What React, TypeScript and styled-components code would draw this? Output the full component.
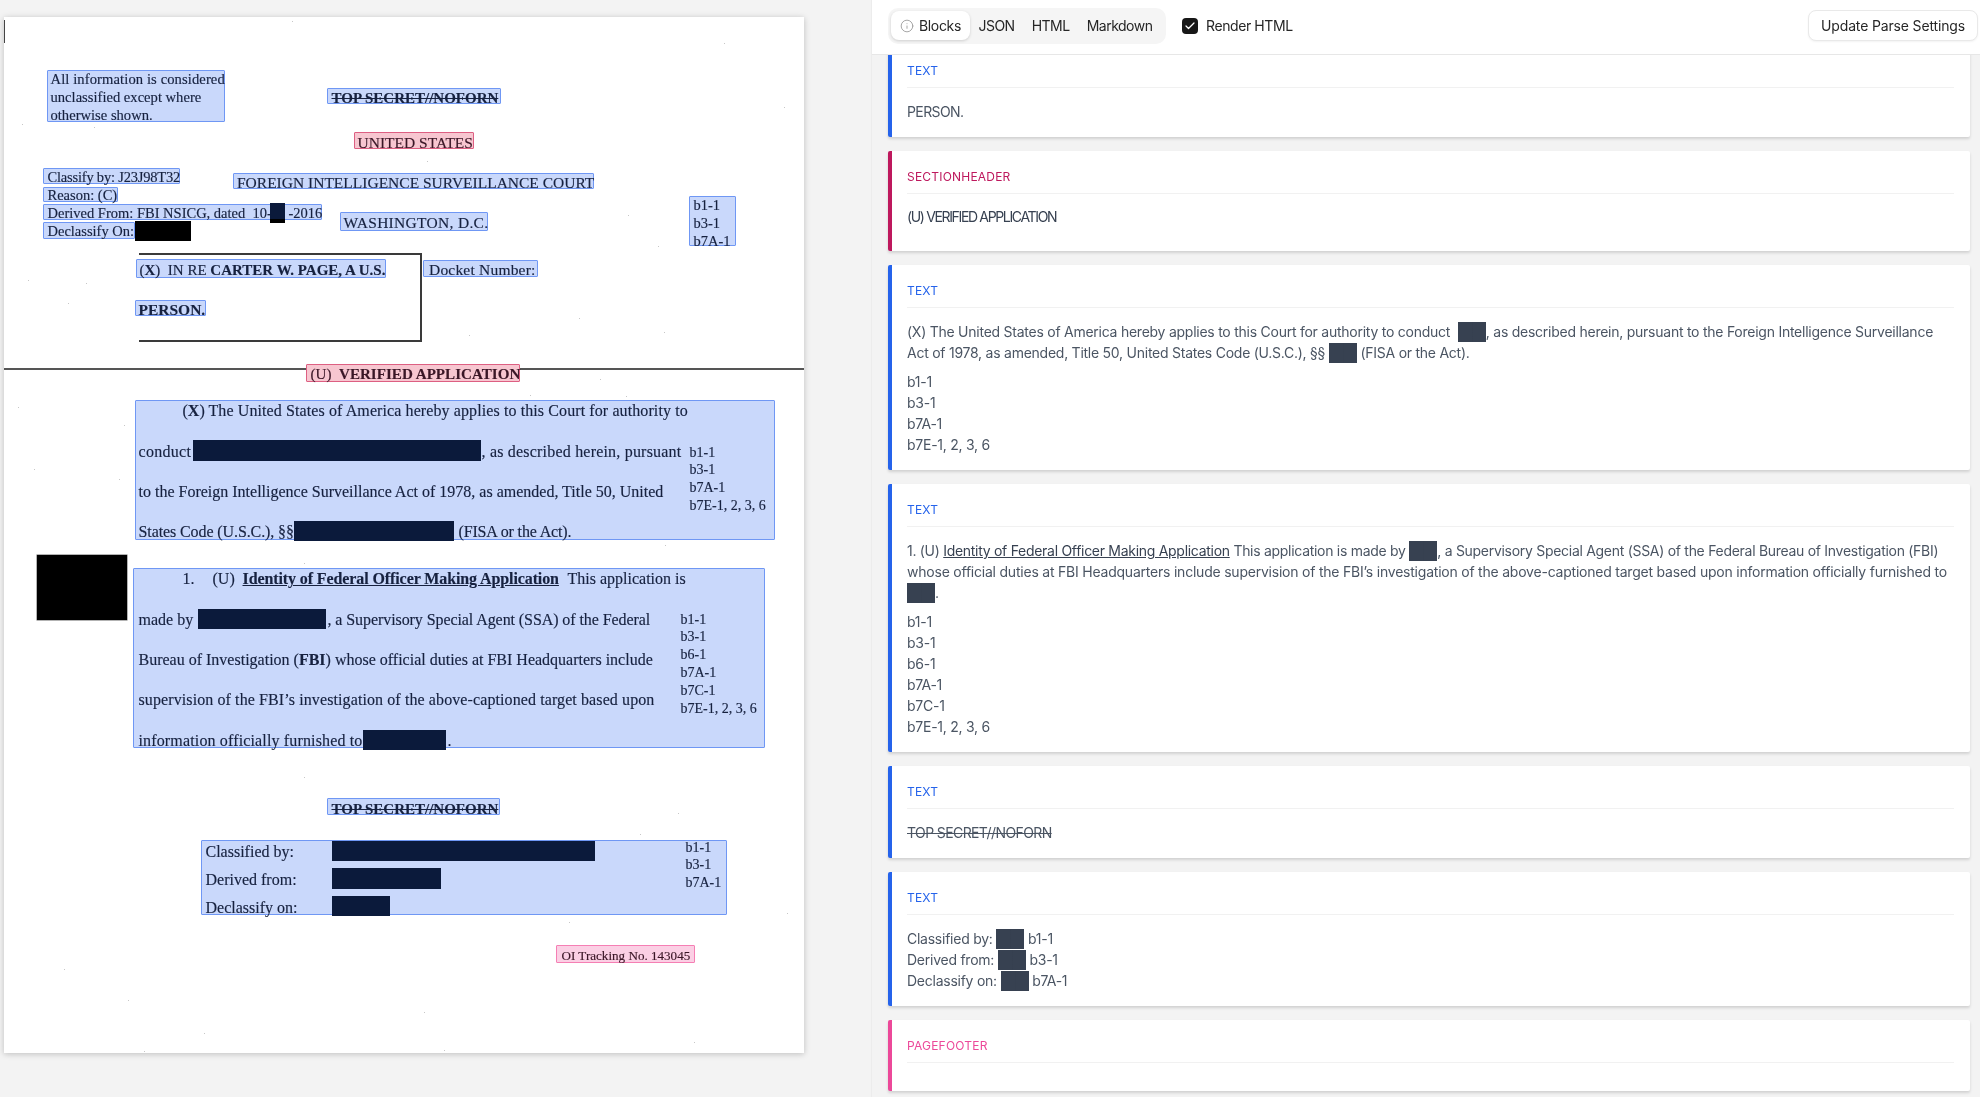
import React from 'react';
import styled, { createGlobalStyle, css } from 'styled-components';
import { Check, Info } from 'lucide-react';

const GlobalStyle = createGlobalStyle`
  html, body { margin: 0; padding: 0; height: 100%; }
  body { background: #f3f3f3; font-family: Inter, "Liberation Sans", sans-serif; overflow: hidden; }
`;

const Shell = styled.div`
  display: grid;
  grid-template-columns: 871px 1fr;
  height: 1097px;
  overflow: hidden;
  filter: blur(0.3px);
`;

/* left side: the scanned page, detected regions sit on it as on a canvas */
const DocumentPane = styled.section`
  padding: 17px 0 0 4px;
  background: #f3f3f3;
`;

const Page = styled.div`
  position: relative;
  width: 800px;
  height: 1036px;
  background: #fff;
  box-shadow: 0 1px 6px rgba(0, 0, 0, 0.22);
  font-family: "Liberation Serif", serif;
  -webkit-text-stroke: 0.15px currentColor;
  overflow: hidden;
`;

const regionColors = {
  blue: css`background: #c9d8fb; border-color: #6f97f4; color: #16213f;`,
  rose: css`background: #f7c6d0; border-color: #dd5f82; color: #3a1626;`,
  pink: css`background: #fbcfe4; border-color: #f57fb4; color: #3a1626;`,
};

const Region = styled.div<{
  $x: number;
  $y: number;
  $w: number;
  $h: number;
  $kind?: keyof typeof regionColors;
  $size?: number;
  $pl?: number;
  $pt?: number;
  $top?: boolean;
}>`
  position: absolute;
  left: ${(p) => p.$x}px;
  top: ${(p) => p.$y}px;
  width: ${(p) => p.$w}px;
  height: ${(p) => p.$h}px;
  box-sizing: border-box;
  display: flex;
  flex-direction: column;
  justify-content: ${(p) => (p.$top ? 'flex-start' : 'center')};
  padding: ${(p) => p.$pt ?? 0}px 0 0 ${(p) => p.$pl ?? 3}px;
  border: 1.5px solid;
  border-radius: 1px;
  font-size: ${(p) => p.$size ?? 16}px;
  ${(p) => regionColors[p.$kind ?? 'blue']}
`;

const Row = styled.div<{ $h?: number; $ls?: number; $indent?: number; $bold?: boolean; $strike?: boolean }>`
  flex: none;
  display: flex;
  align-items: center;
  height: ${(p) => p.$h ?? 18}px;
  margin-left: ${(p) => p.$indent ?? 0}px;
  white-space: pre;
  letter-spacing: ${(p) => p.$ls ?? 0}px;
  font-weight: ${(p) => (p.$bold ? 700 : 400)};
  ${(p) => p.$strike && 'text-decoration: line-through;'}
`;

const Cell = styled.span<{ $w?: number; $ls?: number; $ml?: number }>`
  flex: none;
  ${(p) => p.$w !== undefined && `width: ${p.$w}px;`}
  ${(p) => p.$ls !== undefined && `letter-spacing: ${p.$ls}px;`}
  ${(p) => p.$ml !== undefined && `margin-left: ${p.$ml}px;`}
`;

const Redacted = styled.span<{ $w: number; $h?: number; $up?: number; $tone?: 'navy' | 'black' | 'split' }>`
  flex: none;
  width: ${(p) => p.$w}px;
  height: ${(p) => p.$h ?? 20}px;
  margin-bottom: ${(p) => p.$up ?? 0}px;
  background: ${(p) =>
    p.$tone === 'black'
      ? '#000'
      : p.$tone === 'split'
        ? 'linear-gradient(#0b1a3b 78%, #000 78%)'
        : '#0b1a3b'};
`;

/* paragraph regions: text on the left, the margin codes in their own column */
const ParaGrid = styled.div<{ $col: number; $shift: number }>`
  display: grid;
  grid-template-columns: ${(p) => p.$col}px 1fr;
  margin-top: ${(p) => p.$shift}px;
`;

const Rows = styled.div`
  display: flex;
  flex-direction: column;
`;

const MarginCodes = styled.div<{ $offset: number; $size?: number }>`
  display: flex;
  flex-direction: column;
  padding-top: ${(p) => p.$offset}px;
  font-size: ${(p) => p.$size ?? 14}px;
  line-height: 17.8px;
  white-space: pre;
`;

const BlackMark = styled.div`
  position: absolute;
  left: 33px;
  top: 538px;
  width: 90px;
  height: 65px;
  background: #000;
  box-shadow: 0 0 0 0.5px #666;
`;

const CaseFrame = styled.div`
  position: absolute;
  left: 135px;
  top: 236px;
  width: 283px;
  height: 89px;
  box-sizing: border-box;
  border: 2px solid #3a3a3a;
  border-left: none;
`;

const PageRule = styled.div`
  position: absolute;
  left: 0;
  right: 0;
  top: 351px;
  height: 2px;
  background: #555;
`;

const Heavy = styled.b`
  font-weight: 700;
`;

const HeavyLink = styled.b`
  font-weight: 700;
  text-decoration: underline;
`;

const Speck = styled.i<{ $x: number; $y: number }>`
  position: absolute;
  left: ${(p) => p.$x}px;
  top: ${(p) => p.$y}px;
  width: 1.2px;
  height: 1.2px;
  background: #b5b5b5;
  border-radius: 50%;
`;

const EdgeMark = styled.i`
  position: absolute;
  left: 0;
  top: 3px;
  width: 1px;
  height: 23px;
  background: #444;
`;

const specks = [
  [288, 4], [720, 26], [780, 90], [18, 107], [90, 110], [423, 144], [624, 198], [654, 229], [24, 263],
  [82, 266], [64, 286], [575, 301], [465, 318], [660, 315], [596, 362], [526, 378], [622, 379], [14, 390],
  [120, 408], [327, 415], [30, 452], [115, 462], [760, 415], [730, 420], [465, 398], [300, 546], [661, 528],
  [355, 663], [518, 680], [615, 705], [300, 760], [674, 796], [636, 817], [783, 896], [565, 905], [60, 952],
  [124, 983], [420, 995], [200, 1016], [140, 1034], [440, 1033], [690, 1025],
];

/* right side: parsed output */
const OutputPane = styled.section`
  display: flex;
  flex-direction: column;
  min-width: 0;
  height: 1097px;
  border-left: 1px solid #ececec;
  box-sizing: border-box;
`;

const Toolbar = styled.header`
  position: relative;
  z-index: 2;
  flex: none;
  display: flex;
  align-items: center;
  box-sizing: border-box;
  height: 55px;
  padding: 0 2px 3px 16px;
  background: #fff;
  border-bottom: 1px solid #e7e7e7;
`;

const Tabs = styled.div`
  display: flex;
  align-items: center;
  height: 36px;
  padding: 0 5px 0 3px;
  border-radius: 10px;
  background: #f5f5f5;
`;

const Tab = styled.div<{ $active?: boolean }>`
  display: flex;
  align-items: center;
  gap: 5px;
  height: 29px;
  padding: 0 8.5px;
  border-radius: 8px;
  font-size: 14px;
  letter-spacing: -0.5px;
  color: #262626;
  ${(p) => p.$active && css`
    padding: 0 9px;
    letter-spacing: -0.35px;
    background: #fff;
    box-shadow: 0 1px 3px rgba(0, 0, 0, 0.16);
  `}
`;

const RenderToggle = styled.label`
  display: flex;
  align-items: center;
  gap: 8px;
  margin-left: 16px;
  font-size: 14px;
  letter-spacing: -0.4px;
  color: #262626;
`;

const CheckMark = styled.span`
  display: flex;
  align-items: center;
  justify-content: center;
  width: 16px;
  height: 16px;
  border-radius: 4px;
  background: #171717;
  color: #fff;
`;

const SettingsButton = styled.button`
  margin-left: auto;
  height: 31px;
  padding: 0 12px;
  border: 1px solid #e9e9e9;
  border-radius: 8px;
  background: #fff;
  font-family: inherit;
  font-size: 14px;
  letter-spacing: -0.15px;
  color: #262626;
  box-shadow: 0 1px 2px rgba(0, 0, 0, 0.05);
`;

const Blocks = styled.div`
  flex: 1;
  min-height: 0;
  overflow: hidden;
  display: flex;
  flex-direction: column;
  gap: 14px;
  padding: 0 10px 0 16px;
  margin-top: -10px;
`;

const accents = {
  text: '#2563eb',
  header: '#be185d',
  footer: '#ec4899',
};

const Card = styled.article<{ $kind: keyof typeof accents }>`
  flex: none;
  box-sizing: border-box;
  padding: 16px 16px 16px 15px;
  background: #fff;
  border-left: 4px solid ${(p) => accents[p.$kind]};
  border-radius: 2px;
  box-shadow: 0 2px 3px rgba(0, 0, 0, 0.14);
`;

const CardLabel = styled.div<{ $kind: keyof typeof accents }>`
  height: 20px;
  padding-bottom: 6px;
  border-bottom: 1px solid #f1f1f1;
  margin-bottom: 12px;
  font-size: 12px;
  line-height: 20px;
  letter-spacing: 0.2px;
  color: ${(p) => accents[p.$kind]};
`;

const CardBody = styled.div`
  padding-top: 1px;
  margin-bottom: -1px;
  font-size: 14px;
  line-height: 21px;
  color: #4b5563;
  letter-spacing: -0.25px;
`;

const Para = styled.p<{ $gap?: boolean }>`
  margin: 0 0 ${(p) => (p.$gap ? 8 : 0)}px;
`;

const Caps = styled.span`
  letter-spacing: -0.6px;
`;

const Narrow = styled.span`
  letter-spacing: -0.29px;
`;

const Wide = styled.span`
  letter-spacing: -0.22px;
`;

const SectionTitle = styled.h2`
  margin: 0 0 8px;
  padding-top: 1px;
  font-size: 14px;
  line-height: 20px;
  font-weight: 400;
  letter-spacing: -1.35px;
  color: #374151;
`;

const Struck = styled.s`
  color: #4b5563;
  letter-spacing: -0.6px;
`;

const Underlined = styled.u`
  color: #374151;
`;

const Block = styled.span<{ $lead?: boolean }>`
  display: inline-block;
  width: 28px;
  height: 20px;
  margin-left: ${(p) => (p.$lead ? 4 : 0)}px;
  vertical-align: -5px;
  background: linear-gradient(90deg, #374151 49%, #2d3644 50%, #374151 52%);
`;

const Codes = ({ list }: { list: string[] }) => (
  <Para>
    {list.map((code) => (
      <React.Fragment key={code}>
        {code}
        <br />
      </React.Fragment>
    ))}
  </Para>
);

const ScannedPage = () => (
  <Page>
    <EdgeMark />
    <PageRule />
    <CaseFrame />
    <BlackMark />
    {specks.map(([x, y]) => (
      <Speck key={`${x}-${y}`} $x={x} $y={y} />
    ))}

    <Region $x={43} $y={53} $w={178} $h={52} $size={14.6} $pl={2.5} $top>
      <Row $h={17.8} $ls={0.1}>All information is considered</Row>
      <Row $h={17.8}>unclassified except where</Row>
      <Row $h={17.8}>otherwise shown.</Row>
    </Region>

    <Region $x={323} $y={71} $w={174} $h={16} $size={15} $pl={3.5} $pt={4}>
      <Row $bold $strike>TOP SECRET//NOFORN</Row>
    </Region>

    <Region $kind="rose" $x={350} $y={115} $w={120} $h={17} $size={15.5} $pl={2.5} $pt={5}>
      <Row>UNITED STATES</Row>
    </Region>

    <Region $x={39} $y={151} $w={137} $h={16} $size={14.5} $pl={3.5} $pt={2}>
      <Row $ls={-0.2}>Classify by: J23J98T32</Row>
    </Region>
    <Region $x={39} $y={170} $w={75} $h={15} $size={14.5} $pl={3.5} $pt={1}>
      <Row>Reason: (C)</Row>
    </Region>
    <Region $x={39} $y={187} $w={279} $h={16} $size={14.5} $pl={3.5} $pt={2}>
      <Row>
        <Cell $w={222}>Derived From: FBI NSICG, dated  10-</Cell>
        <Redacted $w={15} $tone="split" />
        <Cell $ml={4}>-2016</Cell>
      </Row>
    </Region>
    <Region $x={39} $y={205} $w={92} $h={17} $size={14.5} $pl={3.5} $pt={1}>
      <Row>
        <Cell $w={87}>Declassify On:</Cell>
        <Redacted $w={56} $tone="black" />
      </Row>
    </Region>

    <Region $x={229} $y={156} $w={361} $h={16} $size={15.5} $pl={3} $pt={4}>
      <Row>FOREIGN INTELLIGENCE SURVEILLANCE COURT</Row>
    </Region>
    <Region $x={335.5} $y={195} $w={148.5} $h={19} $size={15.5} $pl={3} $pt={3}>
      <Row $ls={0.3}>WASHINGTON, D.C.</Row>
    </Region>

    <Region $x={685} $y={179} $w={47} $h={50} $top $pl={3.5}>
      <MarginCodes $offset={0} $size={14.5}>
        <span>b1-1</span>
        <span>b3-1</span>
        <span>b7A-1</span>
      </MarginCodes>
    </Region>

    <Region $x={132} $y={242} $w={250} $h={19} $size={15} $pl={2.5} $pt={3}>
      <Row>
        <Cell>(<Heavy>X</Heavy>)  IN RE <Heavy>CARTER W. PAGE, A U.S.</Heavy></Cell>
      </Row>
    </Region>
    <Region $x={131} $y={283} $w={70.5} $h={16} $size={15.5} $pl={2.5} $pt={4}>
      <Row $bold>PERSON.</Row>
    </Region>
    <Region $x={419} $y={243} $w={115} $h={17} $size={15.5} $pl={5} $pt={3}>
      <Row $ls={0.2}>Docket Number:</Row>
    </Region>

    <Region $kind="rose" $x={301.5} $y={347} $w={214.5} $h={18} $size={15.1} $pl={4} $pt={2}>
      <Row>
        <Cell>(U)  <Heavy>VERIFIED APPLICATION</Heavy></Cell>
      </Row>
    </Region>

    <Region $x={131} $y={383} $w={640} $h={140} $pl={2.5} $top>
      <ParaGrid $col={551} $shift={-9.7}>
        <Rows>
          <Row $h={40.3} $indent={44}>
            <Cell $w={26}>(<Heavy>X</Heavy>)</Cell>
            <Cell $ls={0.1}>The United States of America hereby applies to this Court for authority to</Cell>
          </Row>
          <Row $h={40.3}>
            <Cell $w={54.5} $ls={0.3}>conduct</Cell>
            <Redacted $w={287.5} $h={21} $up={2} />
            <Cell $ml={1} $ls={0.2}>, as described herein, pursuant</Cell>
          </Row>
          <Row $h={40.3}>to the Foreign Intelligence Surveillance Act of 1978, as amended, Title 50, United</Row>
          <Row $h={40.3}>
            <Cell $w={155} $ls={-0.1}>States Code (U.S.C.), §§</Cell>
            <Redacted $w={160} $up={2} />
            <Cell $ml={5} $ls={-0.15}>(FISA or the Act).</Cell>
          </Row>
        </Rows>
        <MarginCodes $offset={52.3}>
          <span>b1-1</span>
          <span>b3-1</span>
          <span>b7A-1</span>
          <span>b7E-1, 2, 3, 6</span>
        </MarginCodes>
      </ParaGrid>
    </Region>

    <Region $x={129} $y={551} $w={632} $h={180} $pl={4.5} $top>
      <ParaGrid $col={542} $shift={-9.7}>
        <Rows>
          <Row $h={40.3} $indent={44}>
            <Cell $w={30}>1.</Cell>
            <Cell $w={30}>(U)</Cell>
            <Cell $w={325} $ls={-0.1}><HeavyLink>Identity of Federal Officer Making Application</HeavyLink></Cell>
            <Cell>This application is</Cell>
          </Row>
          <Row $h={40.3}>
            <Cell $w={59}>made by</Cell>
            <Redacted $w={128} $up={2} />
            <Cell $ml={2} $ls={-0.08}>, a Supervisory Special Agent (SSA) of the Federal</Cell>
          </Row>
          <Row $h={40.3}>
            <Cell>Bureau of Investigation (<Heavy>FBI</Heavy>) whose official duties at FBI Headquarters include</Cell>
          </Row>
          <Row $h={40.3} $ls={0.1}>supervision of the FBI’s investigation of the above-captioned target based upon</Row>
          <Row $h={40.3}>
            <Cell $w={224.5} $ls={0.15}>information officially furnished to</Cell>
            <Redacted $w={82.5} $up={2} />
            <Cell $ml={2}>.</Cell>
          </Row>
        </Rows>
        <MarginCodes $offset={51.3}>
          <span>b1-1</span>
          <span>b3-1</span>
          <span>b6-1</span>
          <span>b7A-1</span>
          <span>b7C-1</span>
          <span>b7E-1, 2, 3, 6</span>
        </MarginCodes>
      </ParaGrid>
    </Region>

    <Region $x={323} $y={781} $w={173} $h={17} $size={15} $pl={3.5} $pt={5}>
      <Row $bold $strike>TOP SECRET//NOFORN</Row>
    </Region>

    <Region $x={197} $y={823} $w={526} $h={75} $pl={3.5} $top>
      <ParaGrid $col={480} $shift={-3.5}>
        <Rows>
          <Row $h={28}>
            <Cell $w={126}>Classified by:</Cell>
            <Redacted $w={263} $up={2} />
          </Row>
          <Row $h={28}>
            <Cell $w={126}>Derived from:</Cell>
            <Redacted $w={109} $h={21} $up={3} />
          </Row>
          <Row $h={28}>
            <Cell $w={126}>Declassify on:</Cell>
            <Redacted $w={58} $up={4} />
          </Row>
        </Rows>
        <MarginCodes $offset={1}>
          <span>b1-1</span>
          <span>b3-1</span>
          <span>b7A-1</span>
        </MarginCodes>
      </ParaGrid>
    </Region>

    <Region $kind="pink" $x={552} $y={928} $w={138.5} $h={18} $size={13.1} $pl={4.5} $pt={4}>
      <Row>OI Tracking No. 143045</Row>
    </Region>
  </Page>
);

const ParsedOutput = () => (
  <OutputPane>
    <Toolbar>
      <Tabs>
        <Tab $active>
          <Info size={14} color="#9a9a9a" strokeWidth={1.5} />
          Blocks
        </Tab>
        <Tab>JSON</Tab>
        <Tab>HTML</Tab>
        <Tab>Markdown</Tab>
      </Tabs>
      <RenderToggle>
        <CheckMark>
          <Check size={12} strokeWidth={2.5} />
        </CheckMark>
        Render HTML
      </RenderToggle>
      <SettingsButton>Update Parse Settings</SettingsButton>
    </Toolbar>
    <Blocks>
      <Card $kind="text">
        <CardLabel $kind="text">TEXT</CardLabel>
        <CardBody><Caps>PERSON.</Caps></CardBody>
      </Card>
      <Card $kind="header">
        <CardLabel $kind="header">SECTIONHEADER</CardLabel>
        <SectionTitle>(U) VERIFIED APPLICATION</SectionTitle>
      </Card>
      <Card $kind="text">
        <CardLabel $kind="text">TEXT</CardLabel>
        <CardBody>
          <Para $gap>
            (X) The United States of America hereby applies to this Court for authority to conduct <Block $lead />, as
            described herein, pursuant to the Foreign Intelligence Surveillance Act of 1978, as amended, Title 50,
            United States Code (U.S.C.), §§ <Block /> (FISA or the Act).
          </Para>
          <Codes list={['b1-1', 'b3-1', 'b7A-1', 'b7E-1, 2, 3, 6']} />
        </CardBody>
      </Card>
      <Card $kind="text">
        <CardLabel $kind="text">TEXT</CardLabel>
        <CardBody>
          <Para $gap>
            <Narrow>
              1. (U) <Underlined>Identity of Federal Officer Making Application</Underlined> This application is made by{' '}
              <Block />, a Supervisory Special Agent (SSA) of the Federal Bureau of Investigation (FBI)
            </Narrow>{' '}
            <Wide>
              whose official duties at FBI Headquarters include supervision of the FBI’s investigation of the
              above-captioned target based upon information officially furnished to
            </Wide>{' '}
            <Block />.
          </Para>
          <Codes list={['b1-1', 'b3-1', 'b6-1', 'b7A-1', 'b7C-1', 'b7E-1, 2, 3, 6']} />
        </CardBody>
      </Card>
      <Card $kind="text">
        <CardLabel $kind="text">TEXT</CardLabel>
        <CardBody>
          <Struck>TOP SECRET//NOFORN</Struck>
        </CardBody>
      </Card>
      <Card $kind="text">
        <CardLabel $kind="text">TEXT</CardLabel>
        <CardBody>
          Classified by: <Block /> b1-1
          <br />
          Derived from: <Block /> b3-1
          <br />
          Declassify on: <Block /> b7A-1
        </CardBody>
      </Card>
      <Card $kind="footer">
        <CardLabel $kind="footer">PAGEFOOTER</CardLabel>
      </Card>
    </Blocks>
  </OutputPane>
);

const App = () => (
  <>
    <GlobalStyle />
    <Shell>
      <DocumentPane>
        <ScannedPage />
      </DocumentPane>
      <ParsedOutput />
    </Shell>
  </>
);

export default App;
